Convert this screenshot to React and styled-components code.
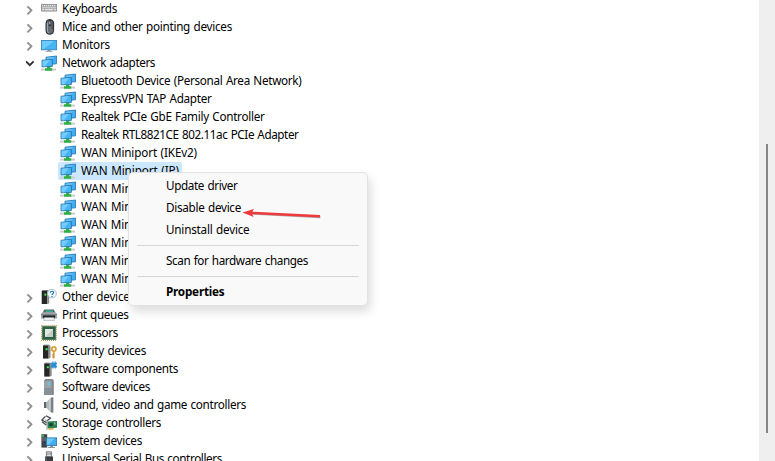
import React, {useLayoutEffect, useRef, useState} from "react";
import styled, {createGlobalStyle, css} from "styled-components";

const GlobalStyle = createGlobalStyle`
    body {
        margin: 0;
        overflow: hidden;
        background: #fff;
    }
`;

const Window = styled.div`
    position: relative;
    display: flex;
    width: 775px;
    height: 461px;
    overflow: hidden;
    background: #fff;
    color: #000;
    font-family: "Noto Sans", "Open Sans", sans-serif;
    font-size: 11.7px;
    word-spacing: 0.7px;
`;

const Tree = styled.div`
    flex: 1;
    padding-left: 26px;
`;

const Row = styled.div`
    display: flex;
    align-items: center;
    height: 18px;
`;

const Toggle = styled.span`
    display: flex;
    width: 13px;
    height: 18px;
`;

const Item = styled.div`
    display: flex;
    align-items: center;
    height: 18px;
    padding: 0 3px 0 2px;
    border-radius: 2px;
    ${({$child}) => $child && css`margin-left: 19px;`}
    ${({$selected}) => $selected && css`background: #cce8ff;`}
`;

const IconBox = styled.svg`
    flex: none;
    width: 16px;
    height: 16px;
    margin-right: 5px;
`;

const Text = styled.span`
    display: inline-block;
    padding-bottom: 2px;
    line-height: 16px;
    white-space: nowrap;
    font-weight: ${({$bold}) => ($bold ? 700 : 400)};
`;

const ScrollBar = styled.div`
    display: flex;
    justify-content: center;
    box-sizing: border-box;
    width: 16px;
    padding-top: 144px;
    background: #efefef;
`;

const Thumb = styled.div`
    width: 2px;
    height: 289px;
    background: #858585;
`;

const Menu = styled.div`
    position: absolute;
    left: 128px;
    top: 172px;
    box-sizing: border-box;
    width: 240px;
    padding: 2px 8px;
    border: 1px solid #e2e2e2;
    border-radius: 5px;
    background: #f9f9f9;
    box-shadow: 3px 6px 10px rgba(0, 0, 0, 0.13);
`;

const MenuItem = styled.div`
    display: flex;
    align-items: center;
    height: 22px;
    padding-left: 29px;
`;

const Divider = styled.div`
    height: 1px;
    margin: 4px 0;
    background: #d6d6d6;
`;

const Pointer = styled.svg`
    position: absolute;
    left: 240px;
    top: 204px;
    width: 84px;
    height: 18px;
`;

// spreads the letters so the caption takes exactly `width` pixels
const Caption = ({text, width, bold}) => {
    const ref = useRef(null);
    const [spacing, setSpacing] = useState(0);

    useLayoutEffect(() => {
        const natural = ref.current.getBoundingClientRect().width;
        setSpacing((width - natural) / text.length);
    }, [text, width]);

    return <Text ref={ref} $bold={bold} style={{letterSpacing: `${spacing}px`}}>{text}</Text>;
};

const Chevron = ({open}) => (
    <svg width="9" height="18" viewBox="0 0 9 18" fill="none" strokeWidth="1.9">
        {open
            ? <path d="M0 7.4 L3.8 11.2 L7.6 7.4" stroke="#303030"/>
            : <path d="M1.4 6.3 L5.4 10.3 L1.4 14.3" stroke="#8f8f8f"/>}
    </svg>
);

const Tower = ({x = 0, y = 0}) => (
    <g transform={`translate(${x} ${y})`}>
        <path d="M0 1h5.6v13.2H0z" fill="#262626"/>
        <path d="M5.6 1l1.9.8v11.6l-1.9.8z" fill="#8b8b8b"/>
        <path d="M0 1l1-.7h5l1.5 1.5-1.9-.8z" fill="#555"/>
        <path d="M2.6 3.8h2v2h-2z" fill="#3df04a"/>
    </g>
);

const icons = {
    keyboard: (
        <g>
            <rect x="0" y="3" width="16" height="7.6" rx=".6" fill="#8c8c8c"/>
            <rect x=".6" y="3.6" width="14.8" height="6.2" fill="#a9a9a9"/>
            <path d="M1 4.7h14M1.5 6.7h13" stroke="#f2f2f2" strokeDasharray="1.2 .8"/>
            <path d="M1 8.7h2M4 8.7h8M13 8.7h2" stroke="#f2f2f2"/>
        </g>
    ),
    mouse: (
        <g>
            <rect x="5" y=".5" width="7.6" height="14.8" rx="3.6" fill="#646b74" stroke="#24272b"/>
            <path d="M6.4 4v7q0 2 1.4 3" stroke="#a3abb5" fill="none"/>
            <path d="M8.8 1v6" stroke="#24272b" strokeWidth="2"/>
            <path d="M8.8 2.4v3" stroke="#d7dde3"/>
            <path d="M11.2 3v7" stroke="#454b52"/>
        </g>
    ),
    monitor: (
        <g>
            <rect x=".4" y="3.4" width="15.2" height="9.4" fill="#45b5f2" stroke="#2d80b3" strokeWidth=".8"/>
            <path d="M1 4h12L3 12H1z" fill="#6ccaff"/>
            <path d="M6.5 13h3v1h-3z" fill="#83939c"/>
            <path d="M4.5 14.5h7" stroke="#a4b0b8"/>
        </g>
    ),
    network: (
        <g>
            <path d="M0 13.6h15v2H0z" fill="#c9cdcb"/>
            <path d="M6 11.8h3.4v1.4h1.8v2.6H4v-2.6h2z" fill="#2fb046"/>
            <path d="M5 2.2 L15.6 1 V8.8 L5 9.6Z" fill="#41aef2" stroke="#1f6fa8" strokeWidth=".8"/>
            <path d="M5.6 2.8l7.4-.8-5 7H5.6z" fill="#67c2fa"/>
            <path d="M1 5.2 L11.4 4.3 V11.4 L1 11.8Z" fill="#48b3f5" stroke="#1f6fa8" strokeWidth=".8"/>
            <path d="M1.6 5.7l7.4-.6-5 6.2H1.6z" fill="#74ccfc"/>
        </g>
    ),
    other: (
        <g>
            <Tower x={.7} y={.8}/>
            <circle cx="11" cy="4.6" r="4.4" fill="#eef6fb" stroke="#9fb4c4" strokeWidth=".8"/>
            <path d="M9.4 3.7q0-1.5 1.6-1.5t1.6 1.4q0 .8-1 1.4-.6.4-.6 1.1" fill="none" stroke="#1673b5" strokeWidth="1.1"/>
            <path d="M10.4 6.9h1.2V8h-1.2z" fill="#1673b5"/>
        </g>
    ),
    printer: (
        <g>
            <path d="M3.2 2.4h9.6L14.4 6H1.6z" fill="#59625f"/>
            <path d="M5 3.4h6.5l.6 1.4H4.4z" fill="#29c7a0"/>
            <path d="M1.6 5.2h12.8L16 7v4.8H0V7z" fill="#a8b0b5"/>
            <path d="M0 6.8h16v1.6H0z" fill="#7d858b"/>
            <path d="M1.8 8.4h12.4v2.4H1.8z" fill="#1d2123"/>
            <path d="M3.4 10.4h9.2l1 3h-11z" fill="#eef1f3" stroke="#899197" strokeWidth=".5"/>
        </g>
    ),
    processor: (
        <g>
            <rect x=".6" y=".6" width="14.8" height="14.8" fill="none" stroke="#b69a45" strokeWidth="1.2" strokeDasharray="1 1"/>
            <rect x="1.2" y="1.2" width="13.6" height="13.6" fill="#2c6047"/>
            <rect x="4" y="4" width="8" height="8" fill="#c8ccc9"/>
            <path d="M4 4h8l-8 8z" fill="#e4e6e4"/>
        </g>
    ),
    security: (
        <g>
            <Tower x={2} y={1.4}/>
            <circle cx="12.8" cy="6" r="2.1" fill="#fff" stroke="#d9a03c" strokeWidth="1.8"/>
            <path d="M12.8 8.4v7" stroke="#d9a03c" strokeWidth="1.8"/>
            <path d="M11 12h1.6M11 14h1.6" stroke="#b9832a"/>
        </g>
    ),
    component: (
        <g>
            <Tower x={3.2} y={1.4}/>
            <path d="M9.6 1.8h1.6V.4h1.2v1.4h1.2V.4h1.2v1.4H16v1.5h-.8v1.5h.8v1.6h-1.2v1.2h-1.2V6.4h-1.2v1.2h-1.2V6.4H9.6V4.8h.8V3.3h-.8z" fill="#2b8dd2"/>
        </g>
    ),
    software: (
        <g>
            <path d="M3 1.4L4.4 0h7l1.4 1.4V16H3z" fill="#7d868c"/>
            <path d="M3 1.6h7.8V16H3z" fill="#9aa2a8"/>
            <path d="M3 9h7.8v7H3z" fill="#88919a"/>
            <circle cx="7.6" cy="5" r="1.3" fill="#4dd5fa"/>
        </g>
    ),
    sound: (
        <g>
            <path d="M3 5h2.6v6H3z" fill="#5d656b"/>
            <path d="M5.6 5L10 .6v14.8L5.6 11z" fill="#b0b8bc"/>
            <path d="M10 .4l2.4-.2v15.6l-2.4-.2z" fill="#7a8389"/>
            <path d="M8.8 2.4v11.2" stroke="#d3d8da"/>
        </g>
    ),
    storage: (
        <g>
            <path d="M5 .8l4.5 2.4L6 5.8M4.4 1.4L1 5l5 3" fill="none" stroke="#45494b" strokeWidth="1.3"/>
            <path d="M4 4.8l2.4 1.4" stroke="#9aa0a2" strokeWidth="1.2"/>
            <path d="M1 6.8l4.6 3.4" stroke="#45494b" strokeWidth="1.3"/>
            <path d="M6.4 6.6L16 6v6.8l-9.6.8z" fill="#2b7d53"/>
            <path d="M8.4 8.2h3.2v2.8H8.4z" fill="#183e2d"/>
            <path d="M13 7.6h1.6v2H13z" fill="#7bc79a"/>
            <path d="M7.6 14.2l5-.4" stroke="#d7a62d" strokeWidth="1.4"/>
            <path d="M6 6v9.2" stroke="#a5abad"/>
        </g>
    ),
    system: (
        <g>
            <path d="M.4 1.2h5.8v13.4H.4z" fill="#3e4549"/>
            <path d="M1 5h4M1 7h4" stroke="#8b9397" strokeWidth=".7"/>
            <path d="M1.2 2.2h1.6v1.5H1.2z" fill="#3ee955"/>
            <rect x="5.4" y="4.9" width="10.3" height="7.6" fill="#3faff0" stroke="#286e9e" strokeWidth=".8"/>
            <path d="M5.9 5.4h7.6L7.4 12H5.9z" fill="#72cafa"/>
            <path d="M9.2 13H12v1H9.2zM7.2 14H14v.9H7.2z" fill="#88979f"/>
        </g>
    ),
    usb: (
        <g>
            <path d="M5.4.8h5.2v5H5.4z" fill="#dadddf" stroke="#5d6468" strokeWidth=".8"/>
            <path d="M6.5 2.2h1v1.3h-1zM8.7 2.2h1v1.3h-1z" fill="#3c4144"/>
            <path d="M4 5.6h8V14q0 2-2 2H6q-2 0-2-2z" fill="#3b3f42"/>
            <path d="M5 6.4v7" stroke="#6d7275"/>
        </g>
    ),
};

const devices = [
    {text: "Keyboards", width: 55, icon: "keyboard"},
    {text: "Mice and other pointing devices", width: 170, icon: "mouse"},
    {text: "Monitors", width: 48, icon: "monitor"},
    {text: "Network adapters", width: 93, icon: "network", open: true},
    {text: "Bluetooth Device (Personal Area Network)", width: 220.5, child: true},
    {text: "ExpressVPN TAP Adapter", width: 130.5, child: true},
    {text: "Realtek PCIe GbE Family Controller", width: 183.5, child: true},
    {text: "Realtek RTL8821CE 802.11ac PCIe Adapter", width: 217.5, child: true},
    {text: "WAN Miniport (IKEv2)", width: 116, child: true},
    {text: "WAN Miniport (IP)", width: 98, child: true, selected: true},
    {text: "WAN Miniport (IPv6)", width: 110, child: true},
    {text: "WAN Miniport (L2TP)", width: 112, child: true},
    {text: "WAN Miniport (Network Monitor)", width: 178, child: true},
    {text: "WAN Miniport (PPPOE)", width: 122, child: true},
    {text: "WAN Miniport (PPTP)", width: 112, child: true},
    {text: "WAN Miniport (SSTP)", width: 112, child: true},
    {text: "Other devices", width: 73, icon: "other"},
    {text: "Print queues", width: 66.5, icon: "printer"},
    {text: "Processors", width: 56, icon: "processor"},
    {text: "Security devices", width: 84, icon: "security"},
    {text: "Software components", width: 116, icon: "component"},
    {text: "Software devices", width: 88, icon: "software"},
    {text: "Sound, video and game controllers", width: 184, icon: "sound"},
    {text: "Storage controllers", width: 99, icon: "storage"},
    {text: "System devices", width: 80, icon: "system"},
    {text: "Universal Serial Bus controllers", width: 160, icon: "usb"},
];

const App = () => (
    <>
        <GlobalStyle/>
        <Window>
            <Tree>
                {devices.map(({text, width, icon, child, open, selected}) => (
                    <Row key={text}>
                        <Toggle>{!child && <Chevron open={open}/>}</Toggle>
                        <Item $child={child} $selected={selected}>
                            <IconBox viewBox="0 0 16 16">{icons[icon || "network"]}</IconBox>
                            <Caption text={text} width={width}/>
                        </Item>
                    </Row>
                ))}
            </Tree>
            <ScrollBar>
                <Thumb/>
            </ScrollBar>
            <Menu>
                <MenuItem><Caption text="Update driver" width={71.5}/></MenuItem>
                <MenuItem><Caption text="Disable device" width={75}/></MenuItem>
                <MenuItem><Caption text="Uninstall device" width={83.5}/></MenuItem>
                <Divider/>
                <MenuItem><Caption text="Scan for hardware changes" width={142}/></MenuItem>
                <Divider/>
                <MenuItem><Caption text="Properties" width={58.5} bold/></MenuItem>
            </Menu>
            <Pointer viewBox="0 0 84 18">
                <path d="M10 9.6L80.5 13.2" stroke="#777" strokeWidth="2" opacity=".6"/>
                <path d="M10 8.8L80 12.3" stroke="#ee3a3c" strokeWidth="2.4"/>
                <path d="M2.5 8.4L14 5l-2.5 3.9L13.6 13z" fill="#ee3a3c"/>
            </Pointer>
        </Window>
    </>
);

export default App;
